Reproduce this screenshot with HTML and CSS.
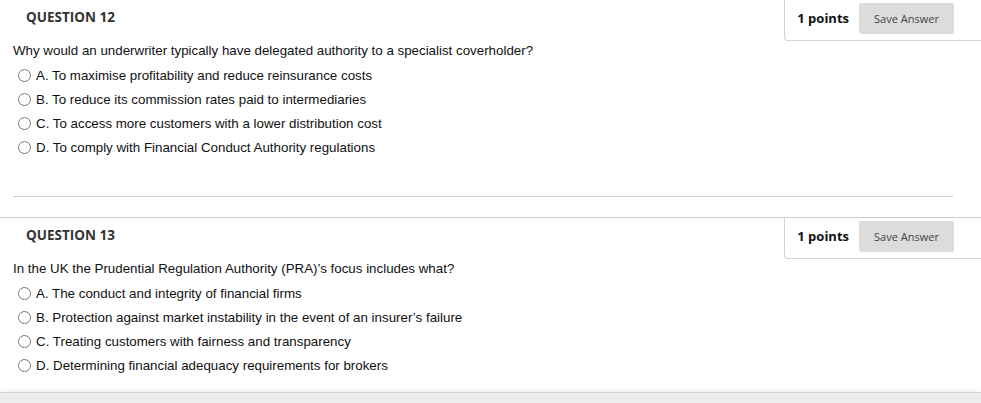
FILE: index.html
```html
<!DOCTYPE html>
<html>
<head>
<meta charset="utf-8">
<link rel="stylesheet" href="styles.css">
</head>
<body>
<div class="question">
  <div class="q-header">
    <h3 class="q-title">QUESTION 12</h3>
    <div class="points-box">
      <span class="points">1 points</span>
      <button class="save">Save Answer</button>
    </div>
  </div>
  <div class="q-body">
    <p class="q-text">Why would an underwriter typically have delegated authority to a specialist coverholder?</p>
    <ul class="options">
      <li><input type="radio" name="q12"><label>A. To maximise profitability and reduce reinsurance costs</label></li>
      <li><input type="radio" name="q12"><label>B. To reduce its commission rates paid to intermediaries</label></li>
      <li><input type="radio" name="q12"><label>C. To access more customers with a lower distribution cost</label></li>
      <li><input type="radio" name="q12"><label>D. To comply with Financial Conduct Authority regulations</label></li>
    </ul>
    <hr class="divider">
  </div>
</div>
<div class="question bordered">
  <div class="q-header">
    <h3 class="q-title">QUESTION 13</h3>
    <div class="points-box">
      <span class="points">1 points</span>
      <button class="save">Save Answer</button>
    </div>
  </div>
  <div class="q-body last">
    <p class="q-text">In the UK the Prudential Regulation Authority (PRA)’s focus includes what?</p>
    <ul class="options">
      <li><input type="radio" name="q13"><label>A. The conduct and integrity of financial firms</label></li>
      <li><input type="radio" name="q13"><label>B. Protection against market instability in the event of an insurer’s failure</label></li>
      <li><input type="radio" name="q13"><label>C. Treating customers with fairness and transparency</label></li>
      <li><input type="radio" name="q13"><label>D. Determining financial adequacy requirements for brokers</label></li>
    </ul>
  </div>
</div>
<div class="footer"></div>
</body>
</html>
```
FILE: styles.css
```css
html, body {
  margin: 0;
  padding: 0;
  background: #fff;
}
body {
  font-family: "Liberation Sans", Arial, sans-serif;
  font-size: 13.33px;
  color: #111;
}
.question.bordered {
  border-top: 1px solid #cfcfcf;
}
.q-header {
  display: flex;
  justify-content: space-between;
  align-items: center;
}
.q-title {
  margin: 0 0 8px 26px;
  font-family: "Open Sans", sans-serif;
  font-weight: 700;
  font-size: 13.5px;
  color: #333;
}
.points-box {
  display: flex;
  align-items: center;
  gap: 10px;
  padding: 3px 27px 6px 12px;
  border-left: 1px solid #d2d2d2;
  border-bottom: 1px solid #d2d2d2;
  border-bottom-left-radius: 4px;
  flex: 0 0 auto;
}
.points {
  font-family: "Open Sans", sans-serif;
  font-weight: 700;
  font-size: 13px;
  color: #111;
  white-space: nowrap;
  padding-bottom: 2px;
}
.save {
  width: 95px;
  height: 31px;
  border: 0;
  border-radius: 2px;
  background: #dcdcdc;
  font-family: "Open Sans", sans-serif;
  font-size: 11px;
  color: #444;
  padding: 0;
  white-space: nowrap;
}
.q-body {
  padding: 0 28px 0 13px;
}
.q-text {
  margin: 1px 0 0 0;
  line-height: 18px;
}
.options {
  list-style: none;
  margin: 3px 0 0 0;
  padding: 0;
}
.options li {
  display: flex;
  align-items: center;
  height: 24px;
}
.options input {
  margin: 0 3px 0 5px;
  width: 13px;
  height: 13px;
}
.options label {
  margin-left: 2px;
}
.divider {
  margin: 37px 0 20px 0;
  border: 0;
  border-top: 1px solid #d0d0d0;
  height: 0;
}
.q-body.last {
  padding-bottom: 15px;
}
.footer {
  height: 10px;
  background: #ededed;
  border-top: 1px solid #d4d4d4;
  box-shadow: 0 -2px 4px rgba(0, 0, 0, 0.06);
}
```
